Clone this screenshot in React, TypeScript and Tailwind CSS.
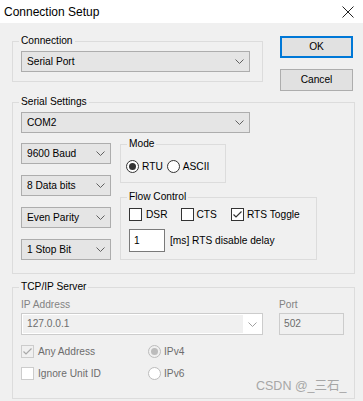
import type { ReactNode } from 'react';

const Chevron = ({ color = '#606060' }: { color?: string }) => (
  <svg width="9" height="5" viewBox="0 0 9 5" fill="none">
    <path d="M0.5 0.5 L4.5 4.5 L8.5 0.5" stroke={color} strokeWidth="1" />
  </svg>
);

function Combo({ text, className = '' }: { text: string; className?: string }) {
  return (
    <div
      className={`h-[21px] border border-[#adadad] bg-[#e5e5e5] flex items-center justify-between pl-[5px] pr-[5px] ${className}`}
    >
      <span>{text}</span>
      <Chevron />
    </div>
  );
}

// group box: the border breaks around the legend, padding goes on the inner div
function Group({
  label,
  className = '',
  inner = '',
  children,
}: {
  label: string;
  className?: string;
  inner?: string;
  children: ReactNode;
}) {
  return (
    <fieldset className={`border border-[#dcdcdc] ${className}`}>
      <legend className="ml-[6px] px-[2px] leading-[12px]">{label}</legend>
      <div className={inner}>{children}</div>
    </fieldset>
  );
}

function Check({
  label,
  checked,
  disabled,
  gap = 'ml-[3px]',
}: {
  label: string;
  checked?: boolean;
  disabled?: boolean;
  gap?: string;
}) {
  const box = disabled
    ? checked
      ? 'border-[#cccccc] bg-[#f0f0f0]'
      : 'border-[#cccccc] bg-white'
    : 'border-[#333333] bg-white';
  return (
    <div className={`flex items-center h-[13px] ${disabled ? 'text-[#6d6d6d]' : ''}`}>
      <div className={`w-[13px] h-[13px] border ${box} flex items-center justify-center`}>
        {checked && (
          <svg width="11" height="11" viewBox="0 0 11 11" fill="none">
            <path d="M1.5 5.5 L4 8 L9.5 2.5" stroke={disabled ? '#a8a8a8' : '#333333'} strokeWidth="1.2" />
          </svg>
        )}
      </div>
      <span className={gap}>{label}</span>
    </div>
  );
}

function Radio({ label, checked, disabled }: { label: string; checked?: boolean; disabled?: boolean }) {
  const ring = disabled
    ? checked
      ? 'border-[#bcbcbc] bg-[#f0f0f0]'
      : 'border-[#bcbcbc] bg-white'
    : 'border-[#333333] bg-white';
  return (
    <div className={`flex items-center h-[13px] ${disabled ? 'text-[#6d6d6d]' : ''}`}>
      <div className={`w-[13px] h-[13px] rounded-full border ${ring} flex items-center justify-center`}>
        {checked && <div className={`w-[7px] h-[7px] rounded-full ${disabled ? 'bg-[#bcbcbc]' : 'bg-[#333333]'}`} />}
      </div>
      <span className="ml-[3px]">{label}</span>
    </div>
  );
}

export default function App() {
  return (
    <div className="w-[363px] h-[401px] bg-[#f0f0f0] flex flex-col font-['Liberation_Sans',sans-serif] text-[10.2px] text-black relative overflow-hidden">
      {/* title bar */}
      <div className="h-[23px] bg-white flex items-center justify-between pl-[4px] pr-[9px] shrink-0">
        <span className="text-[12px]">Connection Setup</span>
        <svg width="12" height="12" viewBox="0 0 12 12" fill="none">
          <path d="M0.5 0.5 L11.5 11.5 M11.5 0.5 L0.5 11.5" stroke="#222" strokeWidth="1" />
        </svg>
      </div>

      <div className="pl-[12px]">
        {/* connection + buttons */}
        <div className="flex mt-[12px] items-start">
          <Group label="Connection" className="w-[251px]" inner="pt-[4px] pb-[9px] pl-[8px]">
            <Combo text="Serial Port" className="w-[229px]" />
          </Group>
          <div className="ml-[17px] mt-[1px] flex flex-col gap-[11px]">
            <button className="w-[73px] h-[22px] border-2 border-[#0078d7] bg-[#e1e1e1] flex items-center justify-center">
              OK
            </button>
            <button className="w-[73px] h-[22px] border border-[#adadad] bg-[#e1e1e1] flex items-center justify-center">
              Cancel
            </button>
          </div>
        </div>

        {/* serial settings */}
        <Group label="Serial Settings" className="w-[343px] mt-[5px]" inner="pt-[4px] pb-[13px] pl-[8px]">
          <Combo text="COM2" className="w-[229px]" />
          <div className="flex items-start mt-[5px]">
            <div className="mt-[5px] flex flex-col gap-[11px]">
              <Combo text="9600 Baud" className="w-[90px]" />
              <Combo text="8 Data bits" className="w-[90px]" />
              <Combo text="Even Parity" className="w-[90px]" />
              <Combo text="1 Stop Bit" className="w-[90px]" />
            </div>
            <div className="ml-[9px] flex flex-col gap-[8px]">
              <Group label="Mode" className="w-[106px]" inner="pt-[10px] pb-[9px] pl-[5px]">
                <div className="flex gap-[4px]">
                  <Radio label="RTU" checked />
                  <Radio label="ASCII" />
                </div>
              </Group>
              <Group label="Flow Control" className="w-[197px]" inner="pt-[5px] pb-[7px] pl-[8px]">
                <div className="flex">
                  <Check label="DSR" gap="ml-[4px]" />
                  <div className="ml-[13px]">
                    <Check label="CTS" />
                  </div>
                  <div className="ml-[14px]">
                    <Check label="RTS Toggle" checked />
                  </div>
                </div>
                <div className="flex items-center mt-[8px]">
                  <div className="w-[36px] h-[23px] border border-[#7a7a7a] bg-white flex items-center pl-[4px]">1</div>
                  <span className="ml-[5px]">[ms] RTS disable delay</span>
                </div>
              </Group>
            </div>
          </div>
        </Group>

        {/* tcp/ip */}
        <Group label="TCP/IP Server" className="w-[343px] mt-[7px]" inner="pt-[6px] pb-[18px] pl-[8px]">
          <div className="flex items-start">
            <div className="w-[242px]">
              <div className="leading-[12px] text-[#838383]">IP Address</div>
              <div className="mt-[2px] h-[22px] border border-[#cccccc] bg-white flex items-center p-[1px]">
                <div className="flex-1 h-full bg-[#f0f0f0] flex items-center pl-[4px] text-[#6d6d6d]">127.0.0.1</div>
                <div className="w-[18px] flex justify-center">
                  <Chevron color="#a0a0a0" />
                </div>
              </div>
            </div>
            <div className="ml-[16px] w-[65px]">
              <div className="leading-[12px] text-[#838383]">Port</div>
              <div className="mt-[2px] h-[22px] border border-[#cccccc] bg-[#f0f0f0] flex items-center pl-[4px] text-[#6d6d6d]">
                502
              </div>
            </div>
          </div>
          <div className="mt-[10px] grid grid-cols-[127px_auto] gap-y-[9px]">
            <Check label="Any Address" checked disabled gap="ml-[4px]" />
            <Radio label="IPv4" checked disabled />
            <Check label="Ignore Unit ID" disabled gap="ml-[4px]" />
            <Radio label="IPv6" disabled />
          </div>
        </Group>
      </div>

      <span className="absolute left-[256px] top-[377px] text-[12.5px] text-[#a6a6a6] font-['Liberation_Sans','Noto_Sans_CJK_SC',sans-serif]">
        CSDN @_三石_
      </span>
    </div>
  );
}
